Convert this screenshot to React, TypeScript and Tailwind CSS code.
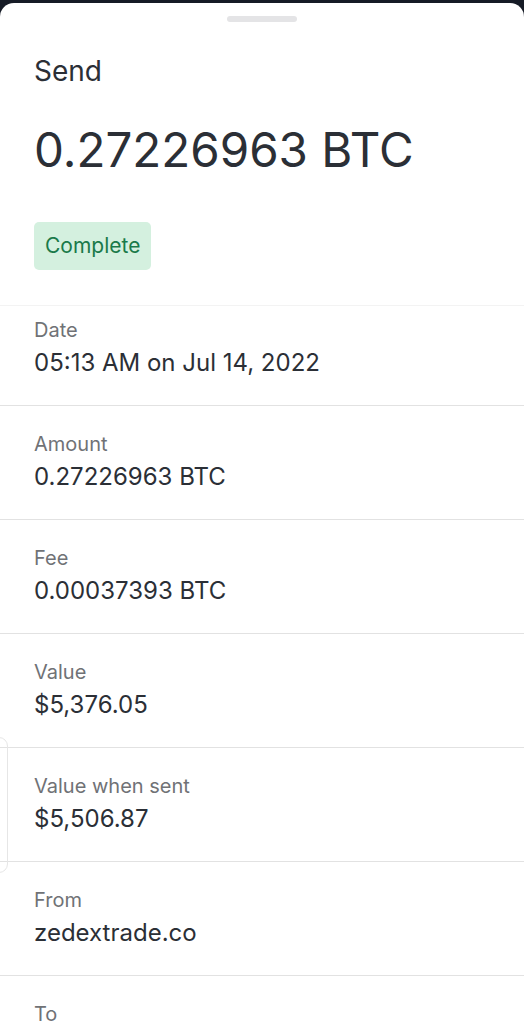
const rows = [
  { label: "Date", value: "05:13 AM on Jul 14, 2022" },
  { label: "Amount", value: "0.27226963 BTC" },
  { label: "Fee", value: "0.00037393 BTC" },
  { label: "Value", value: "$5,376.05" },
  { label: "Value when sent", value: "$5,506.87" },
  { label: "From", value: "zedextrade.co" },
  { label: "To", value: "" },
];

const App = () => {
  return (
    <div className="h-[1024px] overflow-hidden bg-[#161b26] pt-[3px]" style={{ fontFamily: "Inter, 'Noto Sans', sans-serif" }}>
      <div className="relative h-full rounded-t-[14px] bg-white">
        <div className="flex justify-center pt-[13px]">
          <div className="h-[6px] w-[70px] rounded-full bg-[#e4e4e6]" />
        </div>
        <div className="px-[34px]">
          <h2 className="mt-[32px] text-[28px] leading-[34px] text-[#2b2f36]">Send</h2>
          <h1 className="mt-[34px] text-[47.5px] leading-[56px] text-[#2b2f36]">0.27226963 BTC</h1>
          <div className="mt-[44px] inline-flex h-[48px] items-center rounded-[5px] bg-[#d4f0df] px-[11px] text-[21px] text-[#1a7a4a]">
            Complete
          </div>
        </div>
        <div className="mt-[35px] border-t border-[#f3f3f3]">
          {rows.map((row, i) => (
            <div
              key={row.label}
              className={`border-b border-[#e2e2e2] px-[34px] ${i === 0 ? "pb-[27px] pt-[12px]" : "pb-[27px] pt-[26px]"}`}
            >
              <p className="text-[20px] leading-[24px] text-[#707276]">{row.label}</p>
              <p className="mt-[6px] text-[24px] leading-[30px] text-[#2b2f36]">{row.value}</p>
            </div>
          ))}
        </div>
        <div className="absolute left-[-10px] top-[734px] h-[136px] w-[18px] rounded-[10px] border border-[#e6e6e6]" />
      </div>
    </div>
  );
};

export default App;
